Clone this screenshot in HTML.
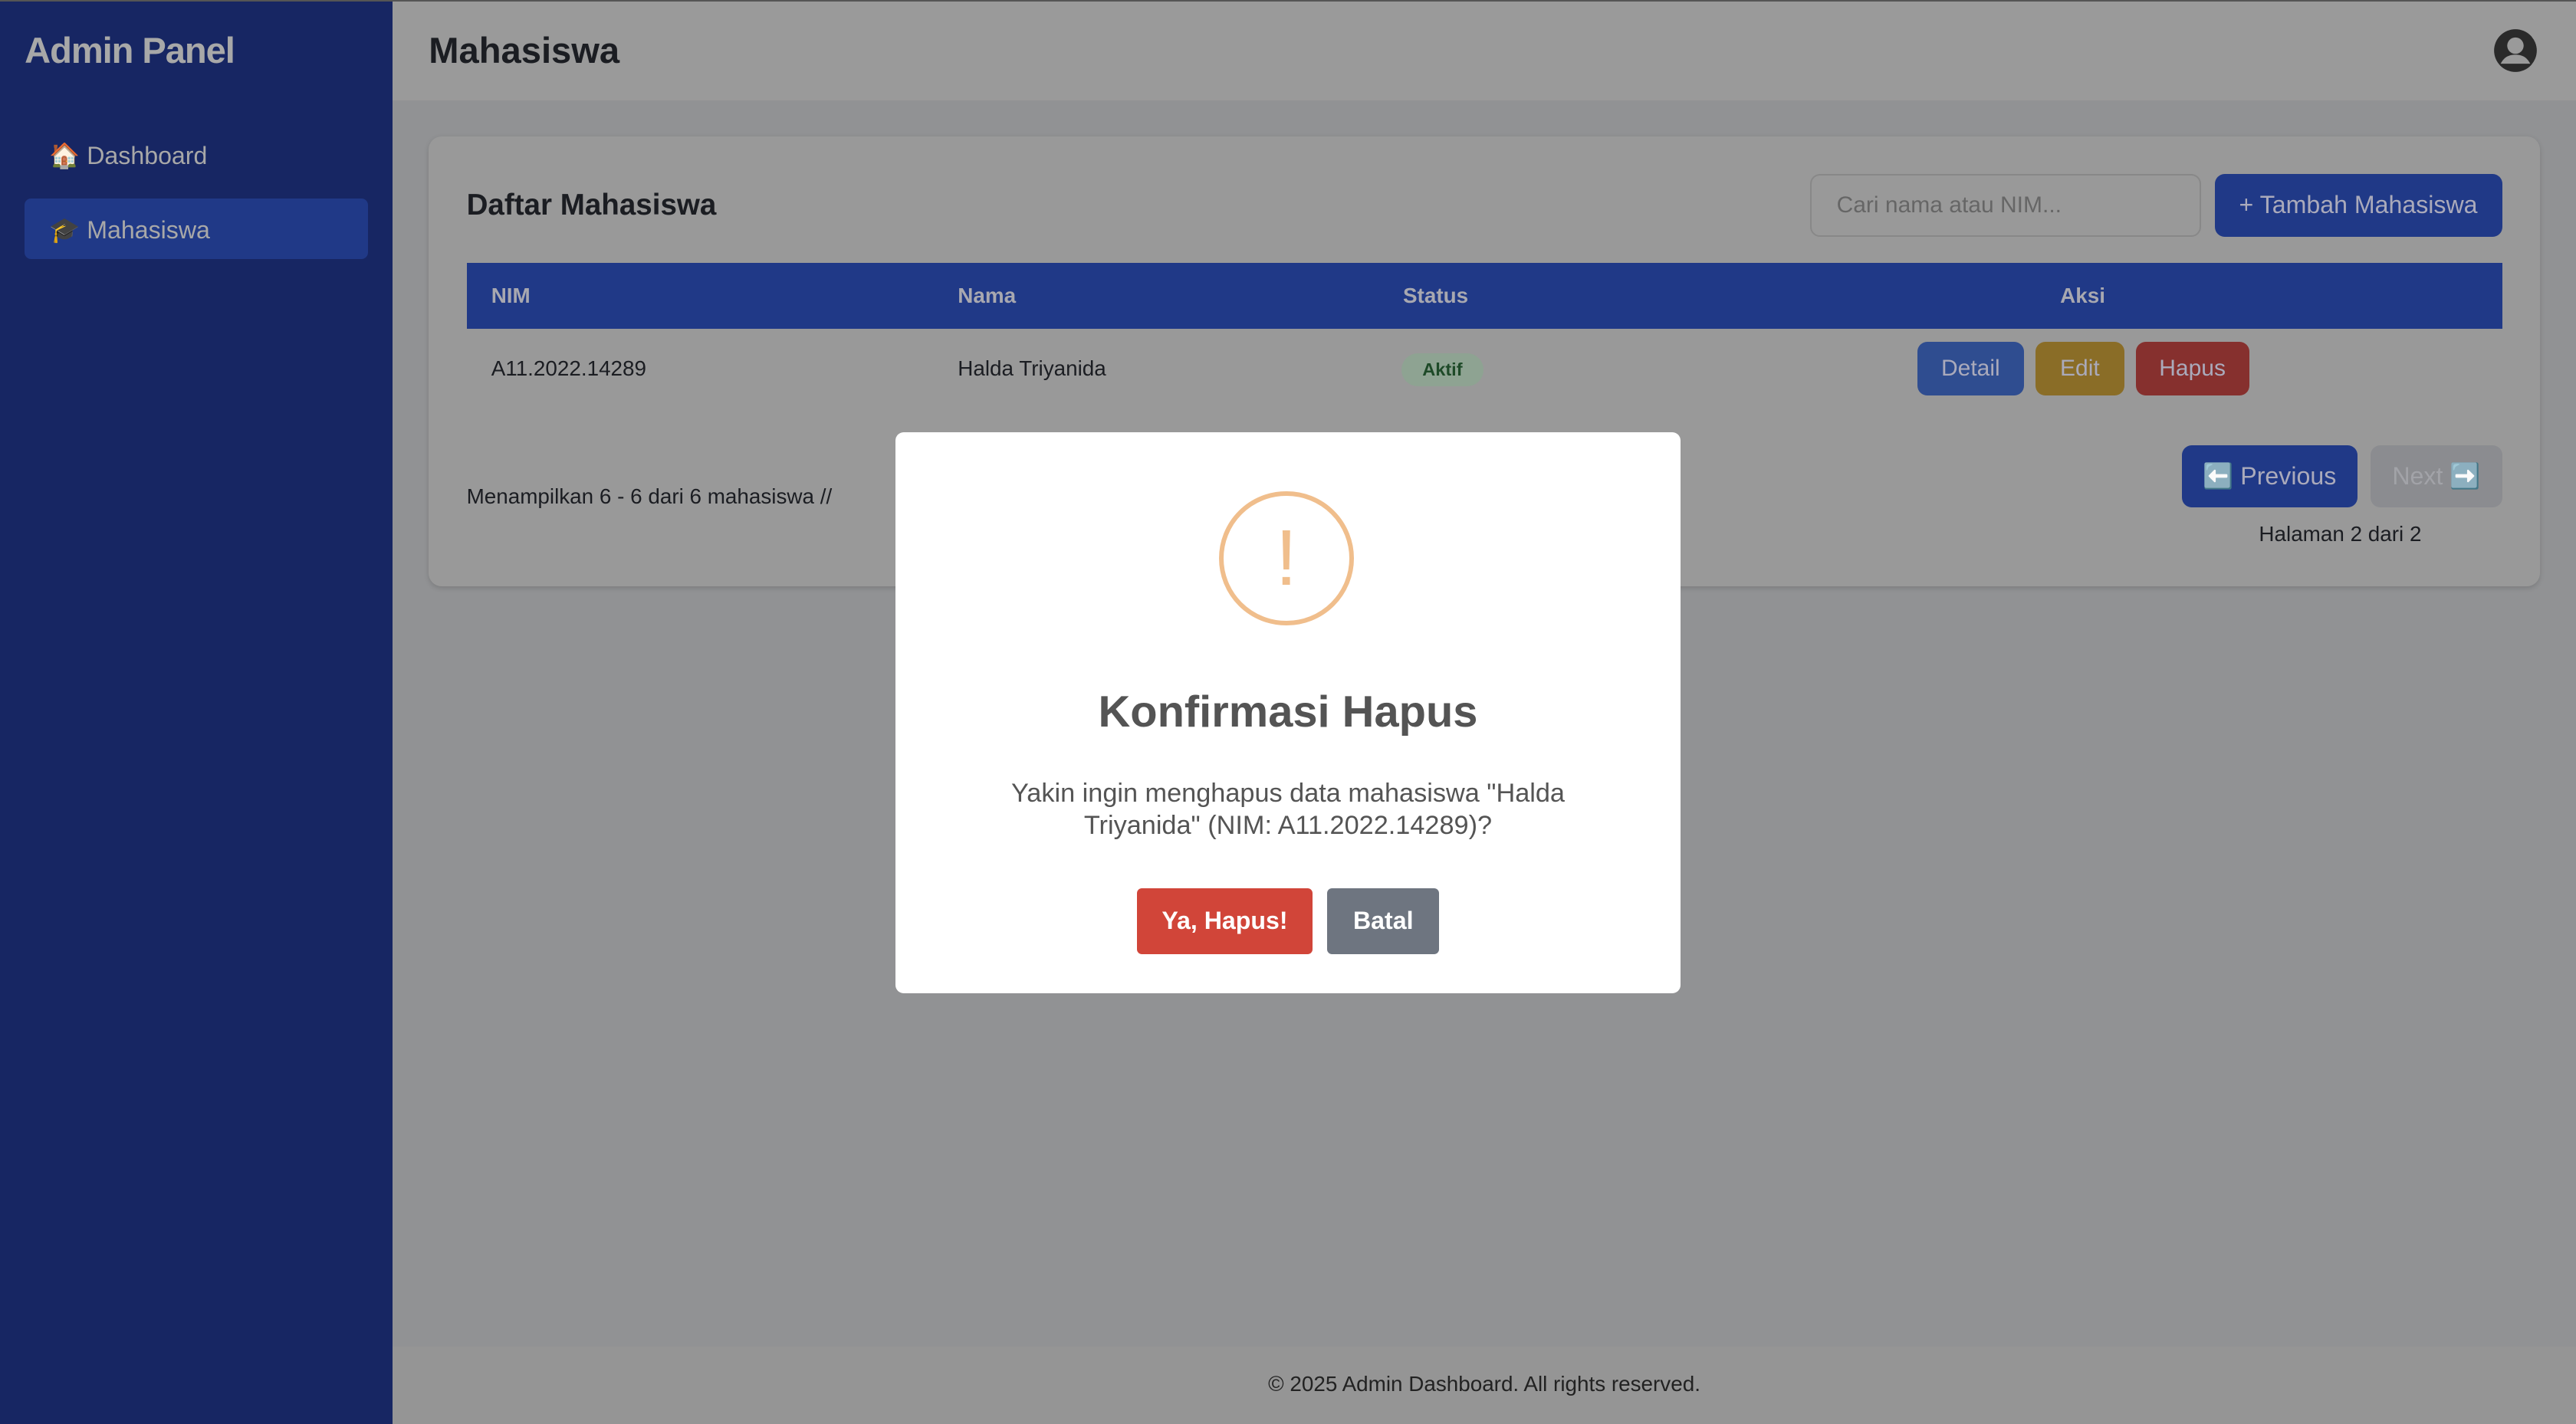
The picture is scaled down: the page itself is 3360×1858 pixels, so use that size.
<!DOCTYPE html>
<html><head><meta charset="utf-8"><style>
*{margin:0;padding:0;box-sizing:border-box}
html,body{width:3360px;height:1858px;overflow:hidden;background:#919294}
#w{zoom:2.142857;width:1568px;height:867px;position:relative;font-family:"Liberation Sans",sans-serif;color:#1b1d22}
.abs{position:absolute}
#sb{left:0;top:0;width:239px;height:867px;background:#172663;border-top:1px solid #555}
#hd{left:239px;top:0;width:1329px;height:61px;background:#9a9a9a;border-top:1px solid #555}
#ft{left:239px;top:820px;width:1329px;height:47px;background:#959595;text-align:center;font-size:13px;line-height:46px;color:#222}
.card{left:261px;top:83px;width:1285px;height:274px;background:#999;border-radius:8px;box-shadow:0 1px 3px rgba(0,0,0,.15)}
.btn{position:absolute;border-radius:6px;color:#aab;text-align:center;font-size:14px}
</style></head><body><div id="w">
<div id="sb" class="abs">
<div class="abs" style="left:15px;top:17px;font-size:22px;font-weight:bold;color:#a8a8a8;letter-spacing:-.5px">Admin Panel</div>
<div class="abs" style="left:30px;top:85px;font-size:15px;color:#a8a8a8">🏠 Dashboard</div>
<div class="abs" style="left:15px;top:120px;width:209px;height:37px;background:#203987;border-radius:4px"></div>
<div class="abs" style="left:30px;top:130px;font-size:15px;color:#a8a8a8">🎓 Mahasiswa</div>
</div>
<div id="hd" class="abs">
<div class="abs" style="left:22px;top:17px;font-size:22px;font-weight:bold;color:#1b1d22">Mahasiswa</div>
<svg class="abs" style="left:1278px;top:16px" width="28" height="28" viewBox="0 0 28 28"><circle cx="14" cy="14" r="13" fill="#2a2a2a"/><circle cx="14" cy="11" r="5" fill="#9a9a9a"/><path d="M5 22c2-4 5-5.5 9-5.5s7 1.5 9 5.5" fill="#9a9a9a"/></svg>
</div>
<div class="abs card"></div>
<div class="abs" style="left:284px;top:115px;font-size:18px;font-weight:bold">Daftar Mahasiswa</div>
<div class="abs" style="left:1102px;top:106px;width:238px;height:38px;border:1px solid #888;border-radius:6px;font-size:14px;color:#666;padding:10px 15px">Cari nama atau NIM...</div>
<div class="btn" style="left:1348px;top:106px;width:175px;height:38px;background:#203987;line-height:38px;font-size:15px">+ Tambah Mahasiswa</div>
<div class="abs" style="left:284px;top:160px;width:1239px;height:40px;background:#203987;color:#a8a8b0;font-size:13px;font-weight:bold;line-height:40px">
<span class="abs" style="left:15px">NIM</span><span class="abs" style="left:299px">Nama</span><span class="abs" style="left:570px">Status</span><span class="abs" style="left:970px">Aksi</span></div>
<div class="abs" style="left:299px;top:217px;font-size:13px">A11.2022.14289</div>
<div class="abs" style="left:583px;top:217px;font-size:13px">Halda Triyanida</div>
<div class="abs" style="left:853px;top:215px;width:50px;height:20px;background:#8ea392;border-radius:10px;font-size:11px;font-weight:bold;color:#1e4a28;text-align:center;line-height:20px">Aktif</div>
<div class="btn" style="left:1167px;top:208px;width:65px;height:33px;background:#2f4d90;line-height:33px">Detail</div>
<div class="btn" style="left:1239px;top:208px;width:54px;height:33px;background:#8a6d27;line-height:33px">Edit</div>
<div class="btn" style="left:1300px;top:208px;width:69px;height:33px;background:#86302e;line-height:33px">Hapus</div>
<div class="abs" style="left:284px;top:295px;font-size:13px">Menampilkan 6 - 6 dari 6 mahasiswa //</div>
<div class="btn" style="left:1328px;top:271px;width:107px;height:38px;background:#203987;line-height:38px;font-size:15px">⬅️ Previous</div>
<div class="btn" style="left:1443px;top:271px;width:80px;height:38px;background:#8b8c90;line-height:38px;font-size:15px;color:#a2a3a8">Next ➡️</div>
<div class="abs" style="left:1375px;top:318px;font-size:13px">Halaman 2 dari 2</div>
<div id="ft" class="abs">© 2025 Admin Dashboard. All rights reserved.</div>
<div class="abs" style="left:545px;top:263px;width:478px;height:342px;background:#fff;border-radius:5px;text-align:center">
<div class="abs" style="left:197px;top:36px;width:82px;height:82px;border:3px solid #f0be8c;border-radius:50%;color:#f0be8c;font-size:48px;line-height:76px">!</div>
<div class="abs" style="left:0;top:155px;width:478px;font-size:27px;font-weight:bold;color:#545454">Konfirmasi Hapus</div>
<div class="abs" style="left:40px;top:210px;width:398px;font-size:16px;line-height:20px;color:#545454">Yakin ingin menghapus data mahasiswa "Halda Triyanida" (NIM: A11.2022.14289)?</div>
<div class="btn" style="left:147px;top:278px;width:107px;height:40px;background:#d14539;color:#fff;font-size:15px;font-weight:bold;line-height:40px;border-radius:3px">Ya, Hapus!</div>
<div class="btn" style="left:263px;top:278px;width:68px;height:40px;background:#6e7580;color:#fff;font-size:15px;font-weight:bold;line-height:40px;border-radius:3px">Batal</div>
</div>
</div></body></html>
